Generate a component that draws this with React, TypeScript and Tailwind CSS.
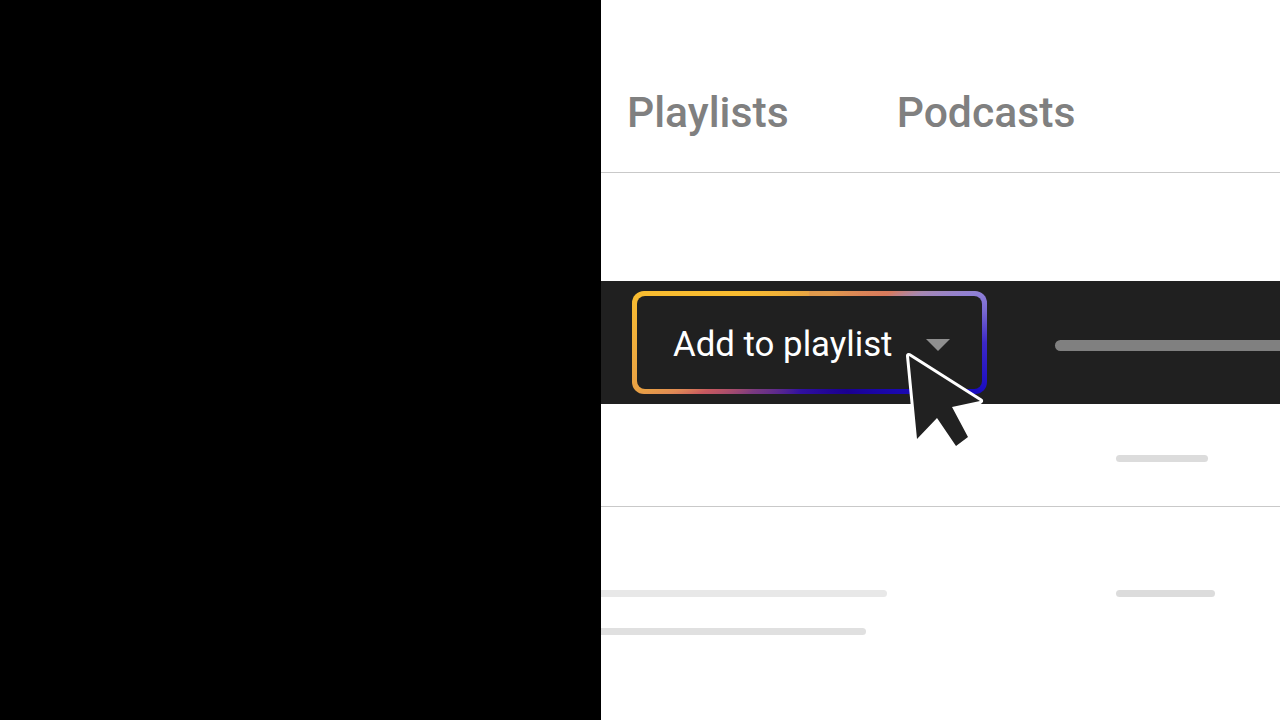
const Cursor = () => (
  <svg
    className="absolute left-[296px] top-[342px] h-[115px] w-[95px]"
    viewBox="0 0 95 115"
    fill="none"
  >
    <path
      d="M12 14 L83 59 L55 65 L71 95 L59 104 L40 76 L20 97 Z"
      fill="#212121"
      stroke="#ffffff"
      strokeWidth="6"
      strokeLinejoin="round"
      paintOrder="stroke"
    />
  </svg>
);

const Skeleton = ({ className }: { className: string }) => (
  <div className={`h-[7px] rounded-full ${className}`} />
);

export default function App() {
  return (
    <div className="flex h-screen w-screen overflow-hidden bg-white font-['Roboto',sans-serif]">
      <div className="w-[601px] shrink-0 bg-black" />
      <div className="relative flex flex-1 flex-col">
        <header className="flex h-[173px] shrink-0 items-start gap-[108px] border-b border-[#c9c9c9] pl-[26px] pt-[91px]">
          <span className="text-[42.7px] font-medium leading-none text-[#808080]">Playlists</span>
          <span className="text-[42.7px] font-medium leading-none text-[#808080]">Podcasts</span>
        </header>

        <div className="h-[108px] shrink-0" />

        <div className="flex h-[123px] shrink-0 items-center bg-[#202020] pl-[31px]">
          <div className="h-[103px] w-[355px] shrink-0 rounded-[12px] bg-[conic-gradient(#e09a4c_24deg,#d87a5c_58deg,#a688b0_66deg,#8f80d8_74deg,#7868d0_80deg,#3c28c8_90deg,#1a0cc0_106deg,#1a0090_142deg,#3010a0_190deg,#7a3a80_229deg,#c85a60_245deg,#e08a55_250deg,#e8a045_254deg,#f0ae3c_270deg,#f8bc30_286deg,#f8bc30_304deg,#e09a4c_384deg)] p-[5px]">
            <div className="flex h-full items-center rounded-[8px] bg-[#202020] pl-[36px]">
              <span className="mt-[3px] text-[34.8px] leading-none text-white">Add to playlist</span>
              <div className="ml-[33px] mt-[4px] h-0 w-0 border-x-[12px] border-t-[12px] border-x-transparent border-t-[#8f8f8f]" />
            </div>
          </div>
          <div className="ml-[68px] mt-[5px] h-[11px] flex-1 rounded-l-full bg-[#808080]" />
        </div>

        <div className="flex h-[103px] shrink-0 items-center justify-end border-b border-[#c9c9c9] pl-[515px] pt-[6px]">
          <Skeleton className="mr-[72px] w-[92px] bg-[#dcdcdc]" />
        </div>

        <div className="flex flex-1 pt-[83px]">
          <div className="flex w-[515px] shrink-0 flex-col gap-[31px]">
            <Skeleton className="w-[286px] rounded-l-none bg-[#e8e8e8]" />
            <Skeleton className="w-[265px] rounded-l-none bg-[#e0e0e0]" />
          </div>
          <Skeleton className="w-[99px] bg-[#dcdcdc]" />
        </div>

        <Cursor />
      </div>
    </div>
  );
}
